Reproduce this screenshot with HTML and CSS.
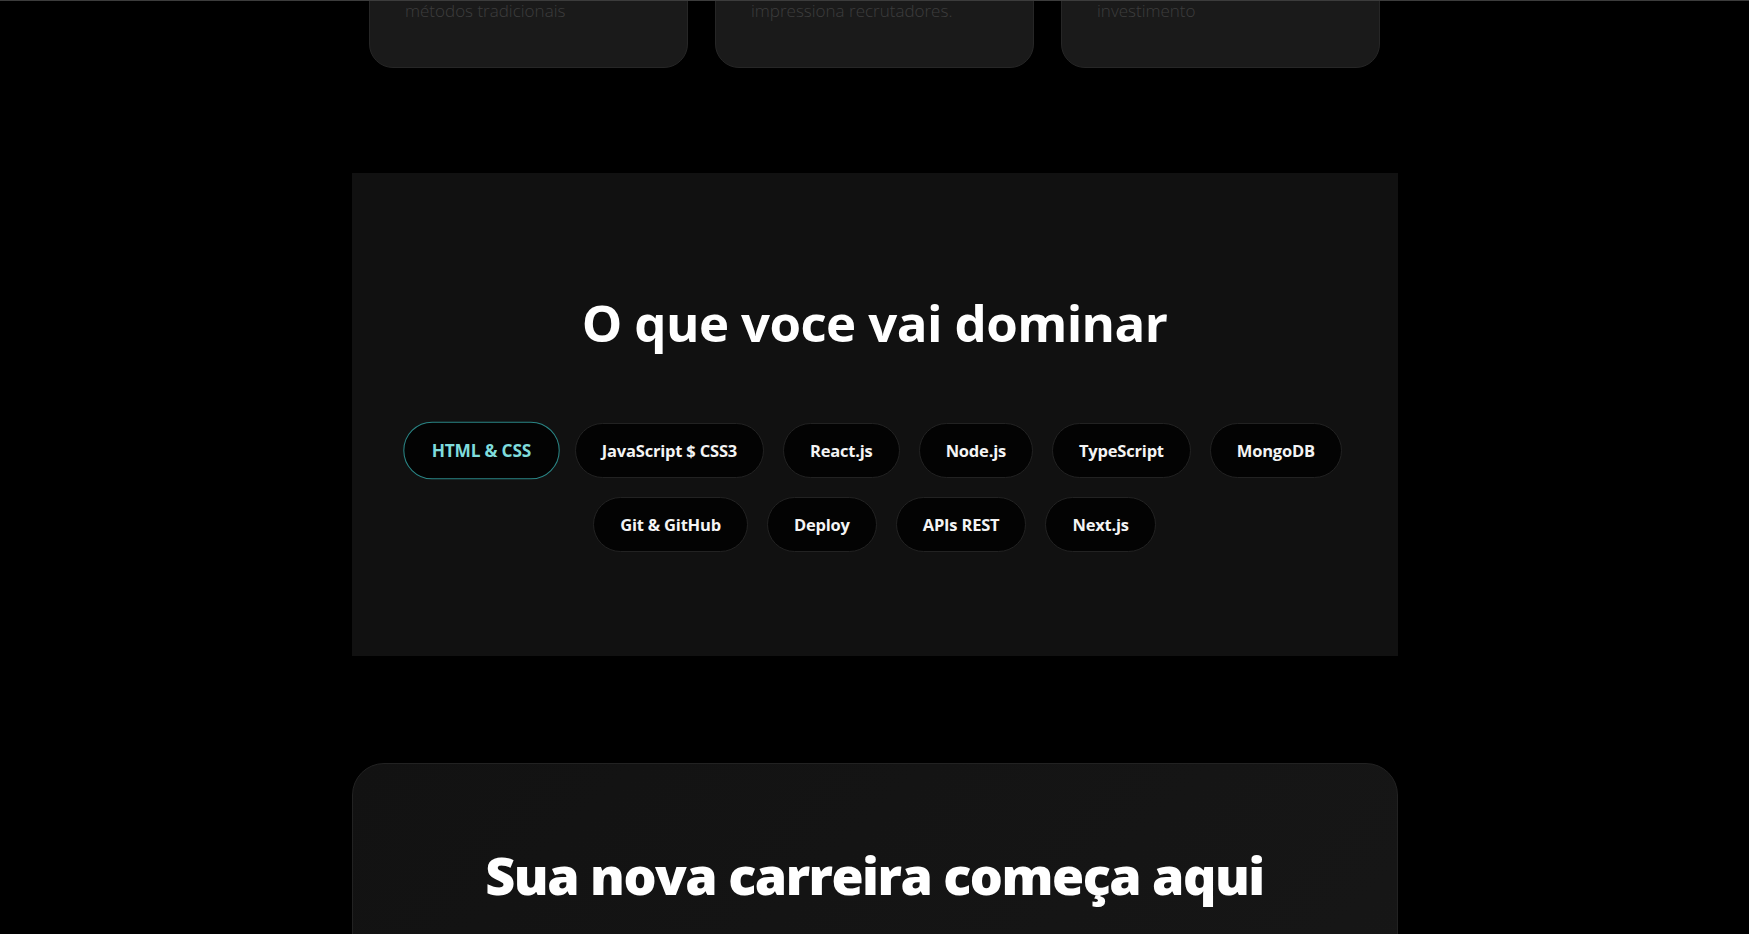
FILE: index.html
```html
<!DOCTYPE html>
<html lang="pt-BR">
<head>
<meta charset="utf-8">
<title>Carreira Dev</title>
<link rel="stylesheet" href="styles.css">
</head>
<body>
<div class="topbar"></div>
<main class="page">
  <section class="benefits">
    <article class="card">
      <p class="card-text">métodos tradicionais</p>
    </article>
    <article class="card">
      <p class="card-text">impressiona recrutadores.</p>
    </article>
    <article class="card">
      <p class="card-text">investimento</p>
    </article>
  </section>

  <section class="skills">
    <h2 class="skills-title">O que voce vai dominar</h2>
    <div class="pills">
      <span class="pill pill-active">HTML &amp; CSS</span>
      <span class="pill">JavaScript $ CSS3</span>
      <span class="pill">React.js</span>
      <span class="pill">Node.js</span>
      <span class="pill">TypeScript</span>
      <span class="pill">MongoDB</span>
      <span class="pill">Git &amp; GitHub</span>
      <span class="pill">Deploy</span>
      <span class="pill">APIs REST</span>
      <span class="pill">Next.js</span>
    </div>
  </section>

  <section class="cta">
    <h2 class="cta-title">Sua nova carreira começa aqui</h2>
  </section>
</main>
</body>
</html>
```

FILE: styles.css
```css
* { box-sizing: border-box; }

html, body {
  margin: 0;
  padding: 0;
  background: #000;
  color: #fff;
  font-family: "Open Sans", "Noto Sans", sans-serif;
}

body { overflow: hidden; }

.topbar {
  position: fixed;
  top: 0;
  left: 0;
  right: 0;
  height: 1px;
  background: #3c3c3c;
  z-index: 10;
}

.page {
  display: flex;
  flex-direction: column;
  align-items: center;
}

.benefits {
  display: grid;
  grid-template-columns: repeat(3, 319px);
  gap: 27px;
  width: 1011px;
  margin-top: -42px;
}

.card {
  background: #1a1a1a;
  border: 1px solid #262626;
  border-radius: 24px;
  padding: 38px 35px 43px;
}

.card-text {
  margin: 0;
  font-size: 17px;
  line-height: 27px;
  font-weight: 300;
  color: #3d3d3d;
}

.skills {
  width: 1046px;
  margin-top: 105px;
  background: #111111;
  padding: 118px 40px 104px;
  display: flex;
  flex-direction: column;
  align-items: center;
}

.skills-title {
  margin: 0;
  font-size: 51px;
  line-height: 62px;
  font-weight: 700;
  letter-spacing: -0.6px;
  color: #fff;
}

.pills {
  margin-top: 70px;
  display: flex;
  flex-wrap: wrap;
  justify-content: center;
  gap: 19px;
  max-width: 960px;
}

.pill {
  display: inline-block;
  padding: 14px 26px;
  line-height: 25px;
  font-size: 16.5px;
  font-weight: 700;
  letter-spacing: -0.2px;
  color: #f4f4f4;
  background: #030303;
  border: 1px solid #222;
  border-radius: 999px;
  white-space: nowrap;
}

.pill-active {
  color: #7fdcdc;
  border-color: #2a8585;
  transform: scale(1.05);
}

.cta {
  width: 1046px;
  margin-top: 107px;
  min-height: 400px;
  padding: 80px 40px;
  background: linear-gradient(135deg, #121212, #171717);
  border: 1px solid #222;
  border-radius: 32px;
  display: flex;
  flex-direction: column;
  align-items: center;
}

.cta-title {
  margin: 0;
  font-size: 52px;
  line-height: 62px;
  font-weight: 800;
  letter-spacing: -1.5px;
  color: #fff;
}
```
